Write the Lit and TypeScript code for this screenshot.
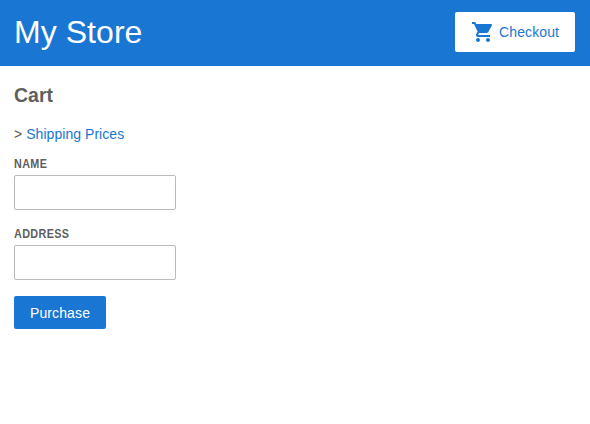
import { LitElement, html, css } from "lit";
import { customElement } from "lit/decorators.js";

@customElement("app-top-bar")
class AppTopBar extends LitElement {
  static styles = css`
    :host {
      display: flex;
      align-items: center;
      justify-content: space-between;
      box-sizing: border-box;
      height: 66px;
      padding: 0 15px 2px 14px;
      background: #1976d2;
    }
    h1 {
      margin: 0;
      font-size: 32px;
      line-height: 38px;
      font-weight: 400;
      letter-spacing: 0.05px;
      color: #fff;
    }
    .checkout {
      display: flex;
      align-items: center;
      box-sizing: border-box;
      width: 120px;
      height: 40px;
      padding: 0 16px;
      border-radius: 2px;
      background: #fff;
      color: #1976d2;
      font-size: 14px;
      letter-spacing: 0.12px;
      text-decoration: none;
      white-space: nowrap;
    }
    svg {
      flex: none;
      width: 24px;
      height: 24px;
      margin-right: 4px;
      fill: #1976d2;
    }
  `;
  render() {
    return html`
      <h1>My Store</h1>
      <a class="checkout">
        <svg viewBox="0 0 24 24">
          <path
            d="M7 18c-1.1 0-1.99.9-1.99 2S5.9 22 7 22s2-.9 2-2-.9-2-2-2zm10 0c-1.1 0-1.99.9-1.99 2s.89 2 1.99 2 2-.9 2-2-.9-2-2-2zM1 2v2h2l3.6 7.59-1.35 2.45c-.16.28-.25.61-.25.96 0 1.1.9 2 2 2h12v-2H7.42c-.14 0-.25-.11-.25-.25l.03-.12.9-1.63h7.45c.75 0 1.41-.41 1.75-1.03l3.58-6.49c.08-.14.12-.31.12-.48 0-.55-.45-1-1-1H5.21l-.94-2H1z"
          />
        </svg>
        Checkout
      </a>
    `;
  }
}

@customElement("app-cart")
class AppCart extends LitElement {
  static styles = css`
    :host {
      display: block;
      padding: 17px 14px;
      color: #555;
      font-size: 14px;
    }
    h3 {
      margin: 0;
      font-size: 19.5px;
      line-height: 24px;
      color: #5f5f5f;
    }
    p {
      margin: 17px 0 0;
      line-height: 20px;
      letter-spacing: 0.05px;
    }
    .link {
      color: #1976d2;
    }
    form {
      display: flex;
      flex-direction: column;
      align-items: flex-start;
    }
    label {
      margin-top: 13px;
      font-size: 12px;
      line-height: 14px;
      font-weight: 700;
      letter-spacing: 0.4px;
      transform: scaleX(0.9);
      transform-origin: left;
      color: #5f5f5f;
      text-transform: uppercase;
    }
    input {
      box-sizing: border-box;
      width: 162px;
      height: 35px;
      margin: 4px 0 4px;
      border: 1px solid #bbb;
      border-radius: 2px;
    }
    button {
      width: 92px;
      height: 33px;
      margin-top: 12px;
      padding: 0;
      border: 0;
      border-radius: 2px;
      background: #1976d2;
      color: #fff;
      font: 14px "Liberation Sans", Arial, sans-serif;
      letter-spacing: 0.12px;
    }
  `;
  render() {
    return html`
      <h3>Cart</h3>
      <p>&gt; <a class="link">Shipping Prices</a></p>
      <form>
        <label for="name">Name</label>
        <input id="name" type="text" />
        <label for="address">Address</label>
        <input id="address" type="text" />
        <button type="button">Purchase</button>
      </form>
    `;
  }
}

@customElement("app-root")
class AppRoot extends LitElement {
  static styles = css`
    :host {
      display: block;
      min-height: 100vh;
      background: #fff;
      font-family: "Liberation Sans", Arial, sans-serif;
    }
  `;
  render() {
    return html`<app-top-bar></app-top-bar><app-cart></app-cart>`;
  }
}
